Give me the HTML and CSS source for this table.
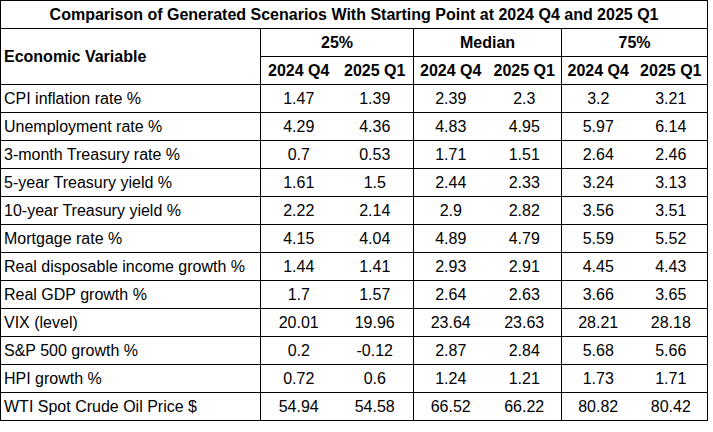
FILE: index.html
```html
<!DOCTYPE html>
<html>
<head>
<meta charset="utf-8">
<link rel="stylesheet" href="styles.css">
</head>
<body>
<table class="tbl">
  <colgroup>
    <col class="c-var">
    <col class="c-a"><col class="c-b">
    <col class="c-c"><col class="c-d">
    <col class="c-e"><col class="c-f">
  </colgroup>
  <thead>
    <tr><th colspan="7" class="title">Comparison of Generated Scenarios With Starting Point at 2024 Q4 and 2025 Q1</th></tr>
    <tr>
      <th rowspan="2" class="var-head">Economic Variable</th>
      <th colspan="2" class="grp">25%</th>
      <th colspan="2" class="grp">Median</th>
      <th colspan="2" class="grp">75%</th>
    </tr>
    <tr>
      <th class="gs">2024 Q4</th><th class="ge">2025 Q1</th>
      <th class="gs">2024 Q4</th><th class="ge">2025 Q1</th>
      <th class="gs">2024 Q4</th><th class="ge">2025 Q1</th>
    </tr>
  </thead>
  <tbody>
    <tr><td class="var">CPI inflation rate %</td><td class="gs">1.47</td><td class="ge">1.39</td><td class="gs">2.39</td><td class="ge">2.3</td><td class="gs">3.2</td><td class="ge">3.21</td></tr>
    <tr><td class="var">Unemployment rate %</td><td class="gs">4.29</td><td class="ge">4.36</td><td class="gs">4.83</td><td class="ge">4.95</td><td class="gs">5.97</td><td class="ge">6.14</td></tr>
    <tr><td class="var">3-month Treasury rate %</td><td class="gs">0.7</td><td class="ge">0.53</td><td class="gs">1.71</td><td class="ge">1.51</td><td class="gs">2.64</td><td class="ge">2.46</td></tr>
    <tr><td class="var">5-year Treasury yield %</td><td class="gs">1.61</td><td class="ge">1.5</td><td class="gs">2.44</td><td class="ge">2.33</td><td class="gs">3.24</td><td class="ge">3.13</td></tr>
    <tr><td class="var">10-year Treasury yield %</td><td class="gs">2.22</td><td class="ge">2.14</td><td class="gs">2.9</td><td class="ge">2.82</td><td class="gs">3.56</td><td class="ge">3.51</td></tr>
    <tr><td class="var">Mortgage rate %</td><td class="gs">4.15</td><td class="ge">4.04</td><td class="gs">4.89</td><td class="ge">4.79</td><td class="gs">5.59</td><td class="ge">5.52</td></tr>
    <tr><td class="var">Real disposable income growth %</td><td class="gs">1.44</td><td class="ge">1.41</td><td class="gs">2.93</td><td class="ge">2.91</td><td class="gs">4.45</td><td class="ge">4.43</td></tr>
    <tr><td class="var">Real GDP growth %</td><td class="gs">1.7</td><td class="ge">1.57</td><td class="gs">2.64</td><td class="ge">2.63</td><td class="gs">3.66</td><td class="ge">3.65</td></tr>
    <tr><td class="var">VIX (level)</td><td class="gs">20.01</td><td class="ge">19.96</td><td class="gs">23.64</td><td class="ge">23.63</td><td class="gs">28.21</td><td class="ge">28.18</td></tr>
    <tr><td class="var">S&amp;P 500 growth %</td><td class="gs">0.2</td><td class="ge">-0.12</td><td class="gs">2.87</td><td class="ge">2.84</td><td class="gs">5.68</td><td class="ge">5.66</td></tr>
    <tr><td class="var">HPI growth %</td><td class="gs">0.72</td><td class="ge">0.6</td><td class="gs">1.24</td><td class="ge">1.21</td><td class="gs">1.73</td><td class="ge">1.71</td></tr>
    <tr><td class="var">WTI Spot Crude Oil Price $</td><td class="gs">54.94</td><td class="ge">54.58</td><td class="gs">66.52</td><td class="ge">66.22</td><td class="gs">80.82</td><td class="ge">80.42</td></tr>
  </tbody>
</table>
</body>
</html>
```

FILE: styles.css
```css
html, body {
  margin: 0;
  padding: 0;
  background: #ffffff;
}

body {
  font-family: "Liberation Sans", Arial, sans-serif;
  font-size: 16px;
  color: #000000;
}

.tbl {
  border-collapse: collapse;
  table-layout: fixed;
  width: 708px;
  border: 1px solid #000;
}

.c-var { width: 260px; }
.c-a { width: 76px; }
.c-b { width: 77px; }
.c-c { width: 74px; }
.c-d { width: 74px; }
.c-e { width: 73px; }
.c-f { width: 73px; }

.tbl th,
.tbl td {
  height: 28px;
  padding: 0 2px;
  box-sizing: border-box;
  border-top: 1px solid #000;
  border-bottom: 1px solid #000;
  text-align: center;
  vertical-align: middle;
  white-space: nowrap;
  line-height: 18px;
}

.tbl th {
  font-weight: bold;
}

.tbl .title {
  font-size: 16px;
}

.tbl .var-head,
.tbl .var {
  text-align: left;
  padding-left: 3px;
  border-right: 1px solid #000;
}

.tbl .grp {
  border-left: 1px solid #000;
  border-right: 1px solid #000;
}

.tbl .gs {
  border-left: 1px solid #000;
}

.tbl .ge {
  border-right: 1px solid #000;
}
```
